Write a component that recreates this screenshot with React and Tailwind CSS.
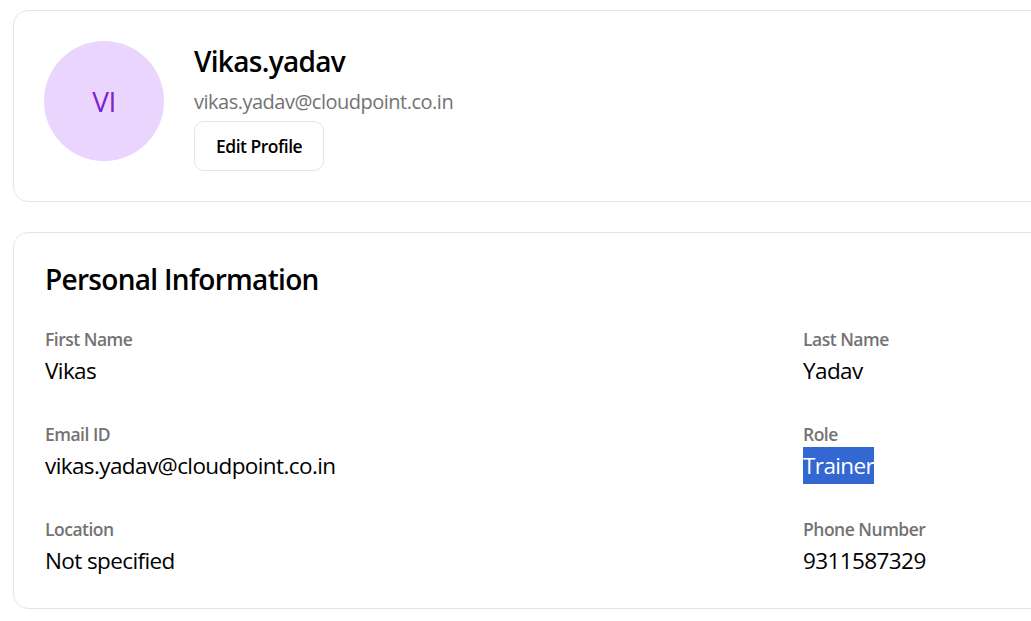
const fields = [
  { label: "First Name", value: "Vikas" },
  { label: "Last Name", value: "Yadav" },
  { label: "Email ID", value: "vikas.yadav@cloudpoint.co.in" },
  { label: "Role", value: "Trainer", selected: true },
  { label: "Location", value: "Not specified" },
  { label: "Phone Number", value: "9311587329" },
];

const App = () => {
  return (
    <div
      className="w-[1031px] h-[621px] overflow-hidden bg-white pl-[13px] pt-[10px]"
      style={{ fontFamily: '"Open Sans", "Noto Sans", sans-serif' }}
    >
      <div className="w-[1548px] border border-[#e5e5e5] rounded-[15px] bg-white p-[30px] flex items-start gap-[30px]">
        <div className="w-[120px] h-[120px] rounded-full bg-[#ead5ff] flex items-center justify-center text-[#7e22ce] text-[28px] tracking-[-0.5px]">
          VI
        </div>
        <div className="flex flex-col">
          <h1 className="text-[28px] leading-[40px] font-semibold tracking-[-0.7px] text-black">Vikas.yadav</h1>
          <p className="mt-[6px] text-[20px] leading-[30px] tracking-[-0.5px] text-[#737373]">vikas.yadav@cloudpoint.co.in</p>
          <button className="mt-[4px] self-start h-[50px] px-[21px] border border-[#e5e5e5] rounded-[10px] bg-white text-[17.5px] font-semibold tracking-[-0.5px] text-black">
            Edit Profile
          </button>
        </div>
      </div>

      <div className="mt-[30px] w-[1548px] border border-[#e5e5e5] rounded-[15px] bg-white px-[31px] pt-[26px] pb-[30px]">
        <h2 className="text-[28px] leading-[40px] font-semibold tracking-[-0.7px] text-black mb-[28px]">Personal Information</h2>
        <div className="grid grid-cols-2 gap-x-[32px] gap-y-[34px]">
          {fields.map((f) => (
            <div key={f.label}>
              <div className="text-[17.5px] leading-[25px] font-semibold tracking-[-0.5px] text-[#737373]">{f.label}</div>
              <div className="mt-[1px] text-[22.5px] leading-[35px] tracking-[-0.6px] text-black">
                {f.selected ? <span className="bg-[#3367d1] text-white py-[3px]">{f.value}</span> : f.value}
              </div>
            </div>
          ))}
        </div>
      </div>
    </div>
  );
};

export default App;
